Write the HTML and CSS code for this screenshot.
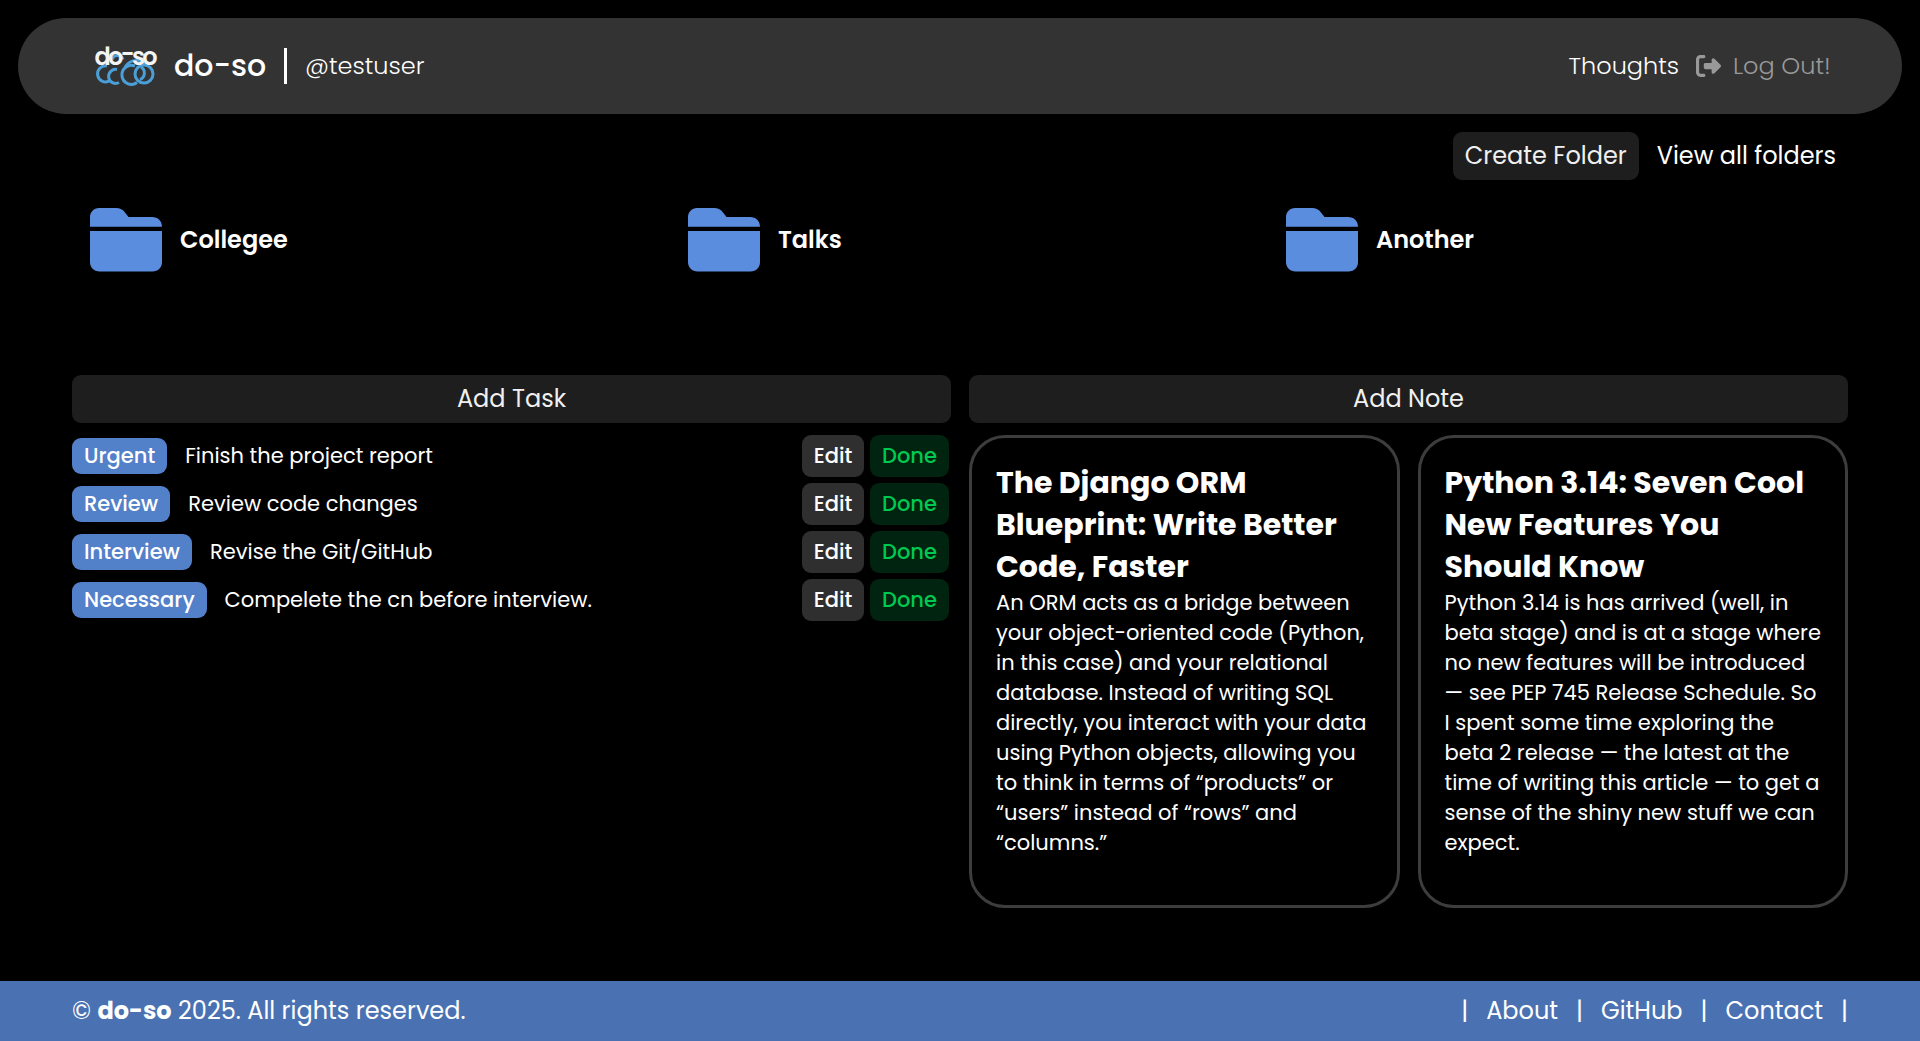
FILE: index.html
```html
<!DOCTYPE html>
<html lang="en">
<head>
  <meta charset="utf-8">
  <title>do-so</title>
  <link rel="stylesheet" href="styles.css">
</head>
<body>
  <svg class="sprite" aria-hidden="true">
    <symbol id="folder" viewBox="0 0 72 64">
      <path d="M9 0H26C30 0 33 1.500 35 4.500L38.500 9H62C68 9 72 13 72 18.700H0V9C0 4 4 0 9 0Z"/>
      <path d="M0 23H72V54C72 59.500 68 63.500 62.500 63.500H9.500C4 63.500 0 59.500 0 54Z"/>
    </symbol>
  </svg>

  <header class="topbar">
    <div class="brand">
      <svg class="logo" viewBox="0 0 62 42">
        <g class="rings">
          <path d="M12 21A8 8 0 1 0 15 35.500"/>
          <path d="M22 24.500A7 7 0 1 0 24 37.500"/>
          <path d="M17 14.500A5.800 5.800 0 0 1 28 14.500"/>
          <path d="M30 22C36 13 47 14 51 20"/>
          <path d="M40 21A9.500 9.500 0 1 0 42 37.500"/>
          <circle cx="49" cy="29" r="9"/>
          <path d="M46 22A7 7 0 0 1 45 34.500"/>
        </g>
        <text x="-0.500" y="20">do<tspan dy="-3">-</tspan><tspan dy="3">so</tspan></text>
      </svg>
      <span class="brand-name">do-so</span>
      <span class="divider"></span>
      <span class="user">@testuser</span>
    </div>
    <nav class="account">
      <a class="thoughts">Thoughts</a>
      <a class="logout">
        <svg class="logout-icon" viewBox="0 32 512 448"><path d="M377.900 105.900L500.700 228.700c7.200 7.200 11.300 17.100 11.300 27.300s-4.100 20.100-11.300 27.300L377.900 406.100c-6.400 6.400-15 9.900-24 9.900c-18.700 0-33.900-15.200-33.900-33.900l0-62.100-128 0c-17.700 0-32-14.300-32-32l0-64c0-17.700 14.300-32 32-32l128 0 0-62.100c0-18.700 15.200-33.900 33.900-33.900c9 0 17.600 3.600 24 9.900zM160 96L96 96c-17.700 0-32 14.300-32 32l0 256c0 17.700 14.300 32 32 32l64 0c17.700 0 32 14.300 32 32s-14.300 32-32 32l-64 0c-53 0-96-43-96-96L0 128C0 75 43 32 96 32l64 0c17.700 0 32 14.300 32 32s-14.300 32-32 32z"/></svg>
        <span>Log Out!</span>
      </a>
    </nav>
  </header>

  <main class="content">
    <div class="folder-actions">
      <a class="button">Create Folder</a>
      <a>View all folders</a>
    </div>

    <section class="folders">
      <a class="folder"><svg class="folder-icon"><use href="#folder"/></svg><span>Collegee</span></a>
      <a class="folder"><svg class="folder-icon"><use href="#folder"/></svg><span>Talks</span></a>
      <a class="folder"><svg class="folder-icon"><use href="#folder"/></svg><span>Another</span></a>
    </section>

    <div class="board">
      <section class="tasks">
        <a class="button">Add Task</a>
        <ul class="task-list">
          <li class="task"><span class="tag">Urgent</span><span class="task-text">Finish the project report</span><a class="edit">Edit</a><a class="done">Done</a></li>
          <li class="task"><span class="tag">Review</span><span class="task-text">Review code changes</span><a class="edit">Edit</a><a class="done">Done</a></li>
          <li class="task"><span class="tag">Interview</span><span class="task-text">Revise the Git/GitHub</span><a class="edit">Edit</a><a class="done">Done</a></li>
          <li class="task"><span class="tag">Necessary</span><span class="task-text">Compelete the cn before interview.</span><a class="edit">Edit</a><a class="done">Done</a></li>
        </ul>
      </section>

      <section class="notes">
        <a class="button">Add Note</a>
        <div class="note-grid">
          <article class="note">
            <h2>The Django ORM Blueprint: Write Better Code, Faster</h2>
            <p>An ORM acts as a bridge between your object-oriented code (Python, in this case) and your relational database. Instead of writing SQL directly, you interact with your data using Python objects, allowing you to think in terms of “products” or “users” instead of “rows” and “columns.”</p>
          </article>
          <article class="note">
            <h2>Python 3.14: Seven Cool New Features You Should Know</h2>
            <p>Python 3.14 is has arrived (well, in beta stage) and is at a stage where no new features will be introduced — see PEP 745 Release Schedule. So I spent some time exploring the beta 2 release — the latest at the time of writing this article — to get a sense of the shiny new stuff we can expect.</p>
          </article>
        </div>
      </section>
    </div>
  </main>

  <footer class="footer">
    <p>© <b>do-so</b> 2025. All rights reserved.</p>
    <nav class="links">
      <span>|</span><a>About</a><span>|</span><a>GitHub</a><span>|</span><a>Contact</a><span>|</span>
    </nav>
  </footer>
</body>
</html>
```
FILE: styles.css
```css
* { box-sizing: border-box; margin: 0; padding: 0; }

body {
  display: flex;
  flex-direction: column;
  min-height: 1041px;
  background: #000;
  color: #fff;
  font: 24px/36px Poppins, Inter, sans-serif;
}

.sprite { position: absolute; width: 0; height: 0; }

/* Header */
.topbar {
  display: flex;
  align-items: center;
  justify-content: space-between;
  height: 96px;
  margin: 18px 18px 0;
  padding: 0 72px 0 77px;
  border-radius: 48px;
  background: #333;
  font-weight: 300;
  white-space: nowrap;
}
.brand, .account, .logout { display: flex; align-items: center; }
.logo { width: 62px; height: 42px; overflow: visible; }
.rings { fill: none; stroke: #4b9fd8; stroke-width: 3; }
.logo text { fill: #f4f4f4; font-size: 24px; font-weight: 600; letter-spacing: -2.7px; }
.brand-name { width: 93px; margin-left: 17px; font-size: 30px; font-weight: 500; }
.divider { width: 3px; height: 36px; margin: 0 18px 0 17px; background: #fff; }
.logout { margin-left: 17px; color: #999; }
.logout span { width: 97px; margin-left: 12px; }
.logout-icon { width: 25px; height: 22px; fill: #999; }

/* Folders */
.content { flex: 1; padding: 18px 72px 0; }
.button {
  display: block;
  padding: 6px 12px;
  border-radius: 9px;
  background: #1e1e1e;
  color: #f0f0f0;
  text-align: center;
}
.folder-actions { display: flex; justify-content: flex-end; align-items: center; gap: 18px; padding-right: 12px; }
.folders {
  display: grid;
  grid-template-columns: repeat(3, 1fr);
  gap: 18px;
  height: 195px;
  padding-top: 28px;
}
.folder { display: flex; align-items: center; gap: 18px; height: 64px; padding-left: 18px; font-weight: 600; }
.folder-icon { width: 72px; height: 64px; fill: #5b8dde; }

/* Tasks */
.board { display: grid; grid-template-columns: repeat(2, minmax(0, 1fr)); gap: 18px; }
.task-list { list-style: none; margin-top: 12px; }
.task { display: flex; align-items: center; height: 42px; margin-bottom: 6px; padding-right: 2px; font-size: 21px; line-height: 30px; }
.tag { padding: 3px 12px; border-radius: 9px; background: #5280c9; font-weight: 500; }
.task-text { flex: 1; margin-left: 18px; }
.edit, .done { padding: 6px 0; border-radius: 9px; font-weight: 500; text-align: center; }
.edit { width: 62px; background: #2f2f2f; }
.done { width: 79px; margin-left: 6px; background: #00240f; color: #00c951; }

/* Notes */
.note-grid { display: grid; grid-template-columns: repeat(2, minmax(0, 1fr)); gap: 18px; margin-top: 12px; }
.note { height: 473px; padding: 24px; border: 3px solid #3d3d3d; border-radius: 36px; }
.note h2 { font-size: 30px; line-height: 42px; font-weight: 700; }
.note p { font-size: 21px; line-height: 30px; }

/* Footer */
.footer {
  display: flex;
  align-items: center;
  justify-content: space-between;
  height: 60px;
  padding: 0 72px;
  background: #4a72b2;
}
.links { display: flex; align-items: center; gap: 18px; }
```
